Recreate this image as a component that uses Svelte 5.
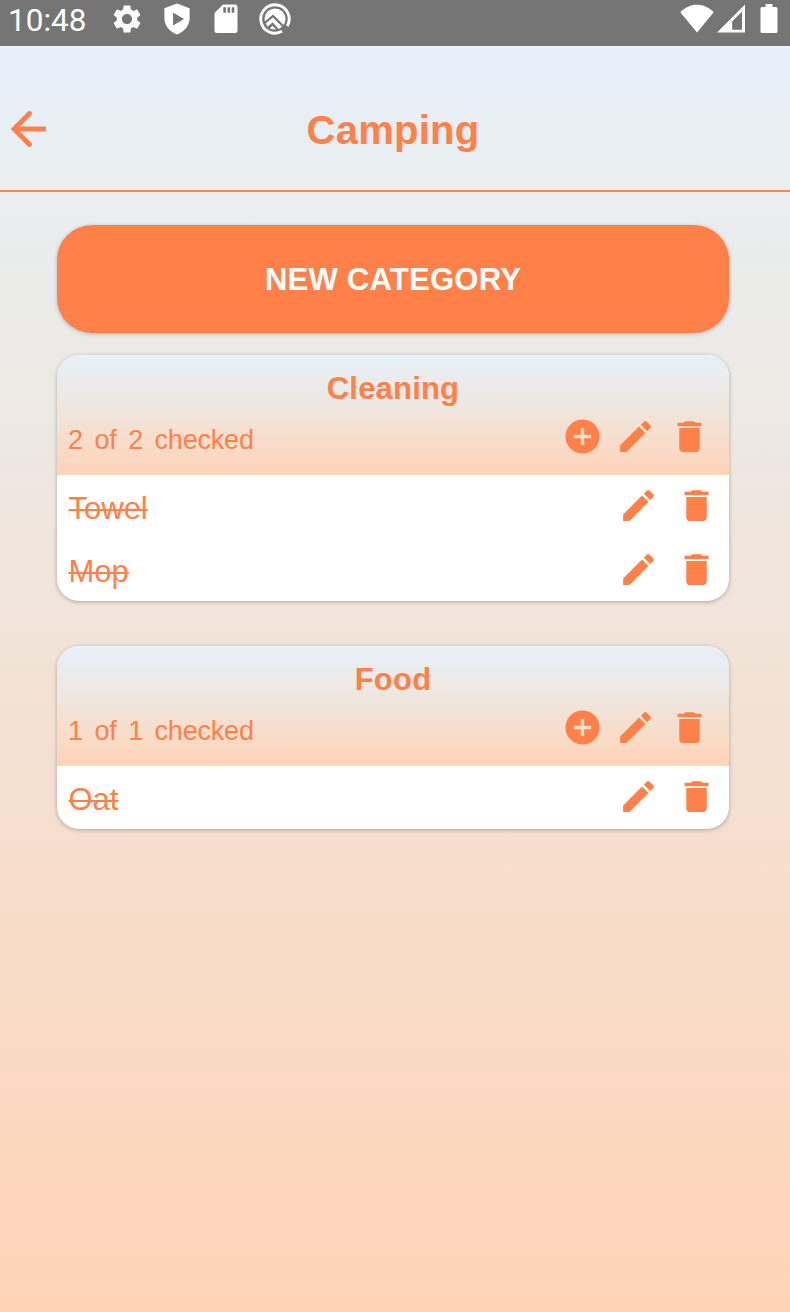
<script>
  const categories = [
    { name: 'Cleaning', items: ['Towel', 'Mop'] },
    { name: 'Food', items: ['Oat'] }
  ];
</script>

{#snippet pencil()}
  <svg class="icon" viewBox="0 0 24 24"><path d="M3 17.25V21h3.75L17.81 9.94l-3.75-3.75L3 17.25zM20.71 7.04a1 1 0 0 0 0-1.41l-2.34-2.34a1 1 0 0 0-1.41 0l-1.83 1.83 3.75 3.75 1.83-1.83z" /></svg>
{/snippet}

{#snippet trash()}
  <svg class="icon" viewBox="0 0 24 24"><path d="M6 19c0 1.1.9 2 2 2h8c1.1 0 2-.9 2-2V7H6v12zM19 4h-3.5l-.6-.7a1 1 0 0 0-.7-.3H9.800a1 1 0 0 0-.7.3L8.500 4H5v2h14V4z" /></svg>
{/snippet}

<div class="screen">
  <div class="status">
    <span class="clock">10:48</span>
    <svg class="gear" width="34" height="34" viewBox="0 0 24 24"><path d="M19.14 12.94c.04-.3.06-.61.06-.94 0-.32-.02-.64-.07-.94l2.03-1.58c.18-.14.23-.41.12-.61l-1.92-3.32c-.12-.22-.37-.29-.59-.22l-2.39.96c-.5-.38-1.03-.7-1.62-.94l-.36-2.54c-.04-.24-.24-.41-.48-.41h-3.84c-.24 0-.43.17-.47.41l-.36 2.54c-.59.24-1.13.57-1.62.94l-2.39-.96c-.22-.08-.47 0-.59.22L2.74 8.87c-.12.21-.08.47.12.61l2.03 1.58c-.05.3-.09.63-.09.94s.02.64.07.94l-2.03 1.58c-.18.14-.23.41-.12.61l1.92 3.32c.12.22.37.29.59.22l2.39-.96c.5.38 1.03.7 1.62.94l.36 2.54c.05.24.24.41.48.41h3.84c.24 0 .44-.17.47-.41l.36-2.54c.59-.24 1.13-.56 1.62-.94l2.39.96c.22.08.47 0 .59-.22l1.92-3.32c.12-.22.07-.47-.12-.61l-2.01-1.58zM12 15.6c-1.98 0-3.6-1.62-3.6-3.6s1.62-3.6 3.6-3.6 3.6 1.62 3.6 3.6-1.62 3.6-3.6 3.6z" /></svg>
    <svg class="shield" width="26" height="32" viewBox="0 0 26 32"><path fill-rule="evenodd" d="M13 .5 25.6 5.2V15c0 7.500-4.900 13.600-12.600 16.500C5.300 28.600.4 22.500.4 15V5.200zM9 9.500v13L20 16z" /></svg>
    <svg class="sd" width="24" height="30" viewBox="0 0 24 30"><path fill-rule="evenodd" d="M9 .6h12A2.500 2.500 0 0 1 23.500 3v23.500a2.500 2.500 0 0 1-2.500 2.500H3A2.500 2.500 0 0 1 .5 26.500V9zM9.300 3.300v5.500h2.600V3.300zm4.200 0v5.500h2.600V3.300zm4.200 0v5.500h2.600V3.300z" /></svg>
    <svg class="ring" width="32" height="32" viewBox="0 0 32 32">
      <circle cx="16" cy="16" r="10.500" />
      <path d="M4 21.500 14 13l14 14" fill="none" stroke="#757575" stroke-width="2.200" />
      <path d="M8 26l5.500-5 6 6.500" fill="none" stroke="#757575" stroke-width="2.400" />
      <path d="M23 28.300A14.200 14.200 0 1 1 28.300 23" fill="none" stroke="#fff" stroke-width="2.900" />
    </svg>
    <span class="fill"></span>
    <svg width="34" height="29" viewBox="0 0 34 29"><path d="M17 28.500.3 8.300C9.500-1.800 24.500-1.800 33.700 8.300z" /></svg>
    <svg class="cell" width="28" height="29" viewBox="0 0 28 29"><path fill-rule="evenodd" d="M28 .5v28H0zM25 7.500 15.200 17.500v8.300H25z" /></svg>
    <svg class="battery" width="18" height="30" viewBox="0 0 18 30"><path d="M5.500 0h7v3H16a1.500 1.500 0 0 1 1.500 1.500v23A1.500 1.500 0 0 1 16 29H2a1.500 1.500 0 0 1-1.500-1.500v-23A1.500 1.500 0 0 1 2 3h3.500z" /></svg>
  </div>

  <main>
    <header>
      <svg class="back" viewBox="0 0 36 36"><path d="M19.500 2.500 4 18l15.500 15.500M4 18h32" fill="none" stroke="currentColor" stroke-width="4.800" /><path d="M19.500 2.500l-1 1M19.500 33.500l-1-1" fill="none" stroke="currentColor" stroke-width="4.800" stroke-linecap="round" /></svg>
      <h1>Camping</h1>
    </header>

    <button>NEW CATEGORY</button>

    {#each categories as cat}
      <section>
        <div class="head">
          <h2>{cat.name}</h2>
          <div class="summary">
            <span class="count">{cat.items.length} of {cat.items.length} checked</span>
            <svg class="icon" viewBox="0 0 24 24"><path d="M17 13h-4v4h-2v-4H7v-2h4V7h2v4h4m-5-9a10 10 0 1 0 0 20 10 10 0 0 0 0-20z" /></svg>
            {@render pencil()}
            {@render trash()}
          </div>
        </div>
        {#each cat.items as item}
          <div class="row">
            <span class="item"><span class="done">{item}</span></span>
            {@render pencil()}
            {@render trash()}
          </div>
        {/each}
      </section>
    {/each}
  </main>
</div>

<style>
  :global(body) { margin: 0; }
  .screen {
    box-sizing: border-box;
    height: 1312px;
    display: flex;
    flex-direction: column;
    overflow: hidden;
    font-family: "Liberation Sans", Arial, sans-serif;
    color: #ff8049;
  }
  svg { display: block; flex: none; fill: currentColor; }
  .status {
    box-sizing: border-box;
    flex: none;
    height: 45.500px;
    padding: 0 12px 8px 8px;
    display: flex;
    align-items: center;
    background: #757575;
    color: #fff;
  }
  .clock { font: 31.500px/38px Roboto, sans-serif; width: 78px; padding-top: 4px; white-space: nowrap; }
  .gear { margin-left: 24px; }
  .shield { margin: 0 0 0 20px; }
  .sd { margin-left: 24px; }
  .ring { margin-left: 21px; }
  .fill { flex: 1; }
  .cell { margin-left: 3px; }
  .battery { margin-left: 15px; }
  main {
    flex: 1;
    display: flex;
    flex-direction: column;
    background: linear-gradient(#e6f0fa, #e9eeef 11%, #ffd3b6);
  }
  header {
    box-sizing: border-box;
    height: 146.500px;
    padding-top: 22px;
    border-bottom: 2.500px solid #ff8049;
    display: grid;
    grid-template-columns: 60px 1fr 64px;
    align-items: center;
  }
  .back { width: 36px; height: 36px; margin: 0 0 0 10px; }
  h1 { margin: 2px 0 0; text-align: center; font-size: 40px; line-height: 46px; letter-spacing: .25px; }
  button {
    flex: none;
    height: 108px;
    margin: 33px 61px 21.500px 57px;
    padding: 2px 0 0;
    border: 0;
    border-radius: 35px;
    background: #ff8049;
    color: #fff;
    font: bold 31px/36px "Liberation Sans", Arial, sans-serif;
    letter-spacing: .25px;
    box-shadow: 0 1px 4px rgba(0, 0, 0, .24);
  }
  section {
    margin: 0 61px 44.500px 57px;
    border-radius: 22px;
    background: #fff;
    overflow: hidden;
    box-shadow: 0 1px 4px rgba(0, 0, 0, .28);
  }
  .head {
    box-sizing: border-box;
    height: 120px;
    padding-top: 16px;
    background: linear-gradient(#e6f1f8, #efe6de 45%, #ffd3b6);
  }
  h2 { margin: 0; text-align: center; font-size: 31px; line-height: 36px; letter-spacing: .2px; }
  .summary { display: flex; align-items: center; height: 41px; margin-top: 9.500px; padding: 0 19px 0 11px; }
  .icon { width: 41px; height: 41px; margin-top: -.5px; }
  .summary .icon + .icon { margin-left: 12.600px; }
  .count { flex: 1; font-size: 27px; line-height: 32px; padding-top: 6px; word-spacing: 4.300px; letter-spacing: -.2px; }
  .row { display: flex; align-items: center; height: 63.250px; padding: 0 12px 0 11.500px; }
  .row .icon + .icon { margin-left: 17.500px; }
  .item { flex: 1; font-size: 31px; line-height: 36px; padding-top: 5.500px; }
  .done { text-decoration: line-through; text-decoration-thickness: 1.500px; }
</style>
